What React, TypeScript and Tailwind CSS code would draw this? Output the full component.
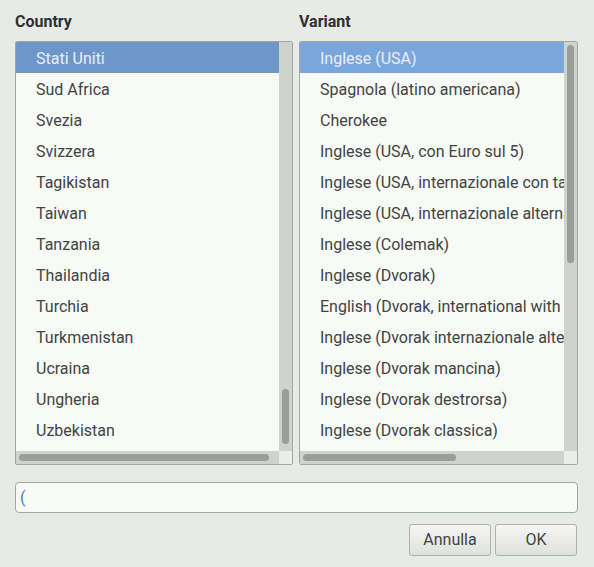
import React from "react";

const countries = [
  "Stati Uniti",
  "Sud Africa",
  "Svezia",
  "Svizzera",
  "Tagikistan",
  "Taiwan",
  "Tanzania",
  "Thailandia",
  "Turchia",
  "Turkmenistan",
  "Ucraina",
  "Ungheria",
  "Uzbekistan",
];

const variants = [
  "Inglese (USA)",
  "Spagnola (latino americana)",
  "Cherokee",
  "Inglese (USA, con Euro sul 5)",
  "Inglese (USA, internazionale con tasti morti)",
  "Inglese (USA, internazionale alternativa)",
  "Inglese (Colemak)",
  "Inglese (Dvorak)",
  "English (Dvorak, international with dead keys)",
  "Inglese (Dvorak internazionale alternativa)",
  "Inglese (Dvorak mancina)",
  "Inglese (Dvorak destrorsa)",
  "Inglese (Dvorak classica)",
];

function ListBox({
  items,
  selColor,
  vThumbTop,
  vThumbHeight,
  hThumbLeft,
  hThumbWidth,
}: {
  items: string[];
  selColor: string;
  vThumbTop: number;
  vThumbHeight: number;
  hThumbLeft: number;
  hThumbWidth: number;
}) {
  return (
    <div className="h-[424px] border border-[#a3a6a2] bg-[#f7faf5] flex flex-col rounded-[2px] overflow-hidden">
      <div className="flex flex-1 min-h-0">
        <div className="flex-1 min-w-0 overflow-hidden">
          {items.map((t, i) => (
            <div
              key={t}
              className="h-[31px] flex items-center pt-[2px] pl-[20px] whitespace-nowrap text-[16px] text-[#414346]"
              style={i === 0 ? { backgroundColor: selColor, color: "#e9eef7" } : undefined}
            >
              {t}
            </div>
          ))}
        </div>
        <div className="w-[13px] bg-[#cfd3cd] relative shrink-0">
          <div
            className="absolute left-[3px] w-[7px] rounded-full bg-[#9a9e99]"
            style={{ top: vThumbTop, height: vThumbHeight }}
          />
        </div>
      </div>
      <div className="h-[13px] flex shrink-0">
        <div className="flex-1 bg-[#cfd3cd] relative">
          <div
            className="absolute top-[3px] h-[7px] rounded-full bg-[#9a9e99]"
            style={{ left: hThumbLeft, width: hThumbWidth }}
          />
        </div>
        <div className="w-[13px] bg-[#eaede8]" />
      </div>
    </div>
  );
}

export default function App() {
  return (
    <div
      className="w-[594px] h-[567px] bg-[#e8eae6] pl-[15px] pr-[16px] pt-[12px]"
      style={{ fontFamily: "Roboto, 'Liberation Sans', sans-serif" }}
    >
      <div className="grid grid-cols-[278px_279px] gap-[6px]">
        <div>
          <div className="h-[19px] mb-[10px] text-[16px] font-bold text-[#2e3032] leading-[19px]">Country</div>
          <ListBox items={countries} selColor="#6e97c9" vThumbTop={347} vThumbHeight={55} hThumbLeft={3} hThumbWidth={250} />
        </div>
        <div>
          <div className="h-[19px] mb-[10px] text-[16px] font-bold text-[#2e3032] leading-[19px]">Variant</div>
          <ListBox items={variants} selColor="#7ba6db" vThumbTop={3} vThumbHeight={218} hThumbLeft={3} hThumbWidth={153} />
        </div>
      </div>
      <div className="mt-[17px] h-[31px] w-[563px] border border-[#a3a6a2] rounded-[4px] bg-[#f7faf5] flex items-center pl-[4px] text-[16px] text-[#4a80c4]">
        (
      </div>
      <div className="mt-[11px] flex justify-end gap-[4px] pr-[1px]">
        <button className="w-[82px] h-[32px] rounded-[3px] border border-[#aeb1ad] bg-gradient-to-b from-[#f5f6f4] to-[#dfe1dd] text-[16px] text-[#414346]">
          Annulla
        </button>
        <button className="w-[82px] h-[32px] rounded-[3px] border border-[#aeb1ad] bg-gradient-to-b from-[#f5f6f4] to-[#dfe1dd] text-[16px] text-[#414346]">
          OK
        </button>
      </div>
    </div>
  );
}
